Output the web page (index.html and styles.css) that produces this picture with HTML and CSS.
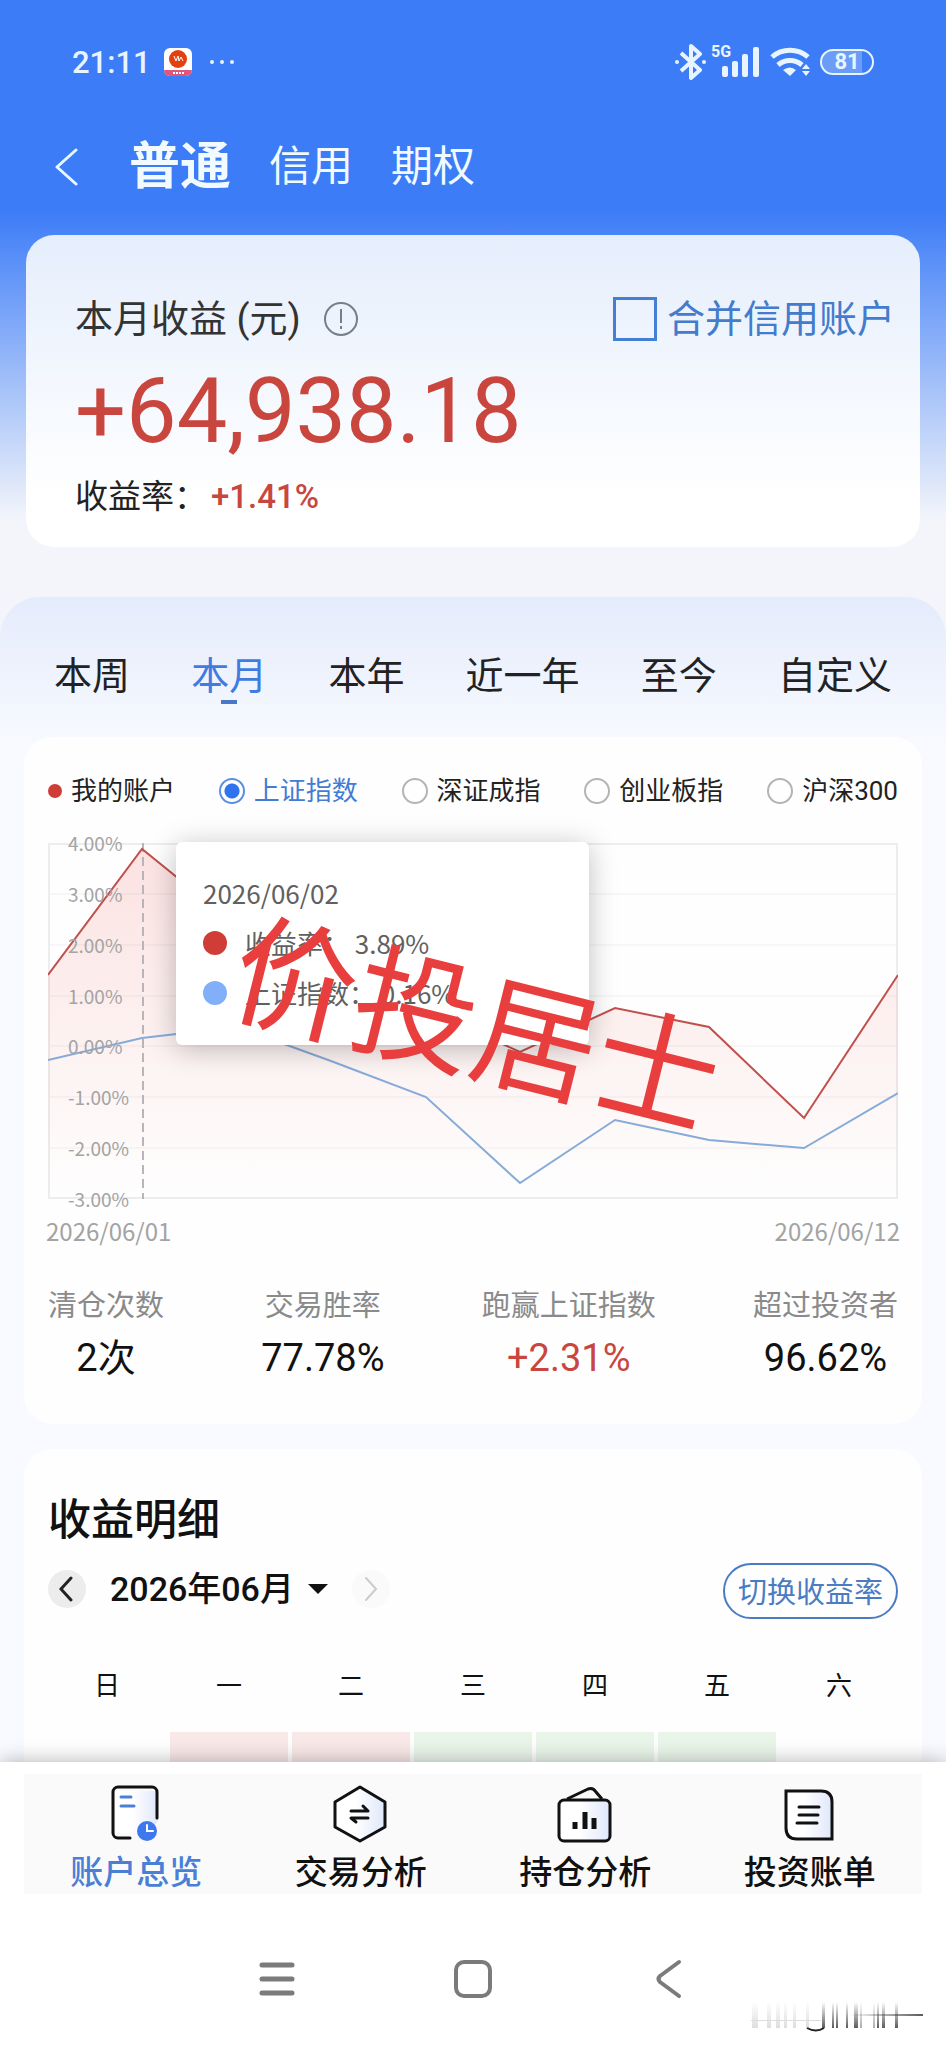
FILE: index.html
```html
<!DOCTYPE html>
<html lang="zh-CN">

<head>
    <title>收益分析</title>
    <meta charset="utf-8">
    <meta name="viewport" content="width=device-width, initial-scale=1.0">
    <link rel="stylesheet" href="styles.css">
</head>

<body>

    <div class="top">
        <div class="status">
            <div class="status-left">
                <span class="time">21:11</span>
                <svg class="app" width="28" height="28" viewBox="0 0 28 28">
                    <rect width="28" height="28" rx="6" fill="#fff" />
                    <path d="M0 22h28a6 6 0 0 1-6 6H6a6 6 0 0 1-6-6z" fill="#e0557c" />
                    <circle cx="14" cy="11" r="9" fill="#e2400e" />
                    <path d="M10 8l2 5 2-5 1 5 2-4 2 4" fill="none" stroke="#fff" stroke-width="1" />
                    <path d="M9 25h11" stroke="#fff" stroke-width="2" stroke-dasharray="2 1" />
                </svg>
                <svg width="28" height="8" viewBox="0 0 28 8" fill="#e8f4ff">
                    <circle cx="4" cy="4" r="2" />
                    <circle cx="14" cy="4" r="2" />
                    <circle cx="24" cy="4" r="2" />
                </svg>
            </div>
            <div class="status-right">
                <svg width="32" height="36" viewBox="0 0 32 36" fill="none" stroke="#e8f4ff" stroke-width="4" stroke-linejoin="round">
                    <path d="M6 9l19 17-9 8V2l9 8L6 27" />
                    <circle cx="2" cy="18" r="2" fill="#e8f4ff" stroke="none" />
                    <circle cx="29" cy="18" r="2" fill="#e8f4ff" stroke="none" />
                </svg>
                <div class="signal">
                    <span>5G</span>
                    <svg width="38" height="30" viewBox="0 0 38 30" fill="#e8f4ff">
                        <rect x="0" y="19" width="6" height="11" rx="2" />
                        <rect x="10" y="14" width="6" height="16" rx="2" />
                        <rect x="20" y="7" width="6" height="23" rx="2" />
                        <rect x="31" y="0" width="6" height="30" rx="2" />
                    </svg>
                </div>
                <svg width="42" height="30" viewBox="0 0 42 30" fill="none" stroke="#e8f4ff">
                    <path d="M2 10C12 1 28 1 38 10" stroke-width="5" />
                    <path d="M8 18c7-6 17-6 24 0" stroke-width="5" />
                    <path d="M13 23q7-5 13 0l-6 6z" fill="#e8f4ff" stroke="none" />
                    <path d="M32 22l4-5 4 5zM32 24l4 5 4-5z" fill="#e8f4ff" stroke="none" />
                </svg>
                <span class="battery">81</span>
            </div>
        </div>

        <div class="header">
            <button class="back" aria-label="返回">
                <svg width="24" height="38" viewBox="0 0 24 38" fill="none" stroke="#e8f8ff" stroke-width="3" stroke-linecap="round" stroke-linejoin="round">
                    <path d="M21 2L2 19l19 17" />
                </svg>
            </button>
            <button class="valgt">普通</button>
            <button>信用</button>
            <button>期权</button>
        </div>

        <div class="income">
            <div class="income-head">
                <h1>本月收益 (元)</h1>
                <svg width="36" height="36" viewBox="0 0 36 36" fill="none" stroke="#777e8a" stroke-width="2">
                    <circle cx="18" cy="18" r="16" />
                    <path d="M18 8v14M18 25v3" />
                </svg>
                <label class="merge"><input type="checkbox">合并信用账户</label>
            </div>
            <p class="amount">+64,938.18</p>
            <p class="rate">收益率：<span class="red">+1.41%</span></p>
        </div>
    </div>

    <main>
        <div class="period">
            <button>本周</button>
            <button class="valgt">本月</button>
            <button>本年</button>
            <button>近一年</button>
            <button>至今</button>
            <button>自定义</button>
        </div>

        <section class="card">
            <div class="legend">
                <span class="mine"><i class="dot"></i>我的账户</span>
                <label><input type="radio" name="indeks" checked>上证指数</label>
                <label><input type="radio" name="indeks">深证成指</label>
                <label><input type="radio" name="indeks">创业板指</label>
                <label><input type="radio" name="indeks">沪深300</label>
            </div>

            <div class="chart">
                <svg class="plot" viewBox="0 0 850 356" preserveAspectRatio="none">
                    <defs>
                        <linearGradient id="fill" x1="0" y1="0" x2="0" y2="1">
                            <stop offset="0" stop-color="#e8453c" stop-opacity="0.15" />
                            <stop offset="1" stop-color="#e8453c" stop-opacity="0" />
                        </linearGradient>
                    </defs>
                    <path class="grid" d="M0 51H850M0 102H850M0 153H850M0 203H850M0 254H850M0 305H850" />
                    <rect class="frame" x="1" y="1" width="848" height="354" />
                    <path fill="url(#fill)" d="M0 132L94 6L189 83L283 120L378 166L472 209L567 165L661 184L756 275L850 132V356H0Z" />
                    <path class="marker" d="M95 0V356" />
                    <path class="line index" d="M0 217L94 195L189 184L283 218L378 254L472 340L567 277L661 297L756 305L850 250" />
                    <path class="line account" d="M0 132L94 6L189 83L283 120L378 166L472 209L567 165L661 184L756 275L850 132" />
                </svg>
                <div class="scale">
                    <span>4.00%</span>
                    <span>3.00%</span>
                    <span>2.00%</span>
                    <span>1.00%</span>
                    <span>0.00%</span>
                    <span>-1.00%</span>
                    <span>-2.00%</span>
                    <span>-3.00%</span>
                </div>
                <div class="tip">
                    <p>2026/06/02</p>
                    <p><i class="dot"></i>收益率： 3.89%</p>
                    <p><i class="dot blue"></i>上证指数： 0.16%</p>
                </div>
                <div class="stamp">价投居士</div>
            </div>
            <div class="dates"><span>2026/06/01</span><span>2026/06/12</span></div>

            <dl class="stats">
                <div>
                    <dt>清仓次数</dt>
                    <dd>2次</dd>
                </div>
                <div>
                    <dt>交易胜率</dt>
                    <dd>77.78%</dd>
                </div>
                <div>
                    <dt>跑赢上证指数</dt>
                    <dd class="red">+2.31%</dd>
                </div>
                <div>
                    <dt>超过投资者</dt>
                    <dd>96.62%</dd>
                </div>
            </dl>
        </section>

        <section class="card detail">
            <h2>收益明细</h2>
            <div class="month">
                <button class="round" aria-label="上个月">
                    <svg width="16" height="26" viewBox="0 0 16 26" fill="none" stroke="#222" stroke-width="3" stroke-linecap="round">
                        <path d="M12 2L2 13l10 11" />
                    </svg>
                </button>
                <button class="pick">2026年06月<svg width="20" height="10" viewBox="0 0 20 10">
                        <path d="M0 0h20L10 10z" fill="#111" />
                    </svg></button>
                <button class="round next" aria-label="下个月">
                    <svg width="16" height="26" viewBox="0 0 16 26" fill="none" stroke="#ccc" stroke-width="2" stroke-linecap="round">
                        <path d="M3 2l10 11L3 24" />
                    </svg>
                </button>
                <button class="switch">切换收益率</button>
            </div>
            <table>
                <thead>
                    <tr>
                        <th>日</th>
                        <th>一</th>
                        <th>二</th>
                        <th>三</th>
                        <th>四</th>
                        <th>五</th>
                        <th>六</th>
                    </tr>
                </thead>
                <tbody>
                    <tr>
                        <td></td>
                        <td class="up"></td>
                        <td class="up"></td>
                        <td class="down"></td>
                        <td class="down"></td>
                        <td class="down"></td>
                        <td></td>
                    </tr>
                </tbody>
            </table>
        </section>
    </main>

    <footer>
        <nav class="menu">
            <a href="#" class="valgt">
                <svg width="64" height="64" viewBox="0 0 64 64" fill="none" stroke="#111" stroke-width="4" stroke-linecap="round">
                    <defs>
                        <linearGradient id="shade" x1="0" y1="0" x2="1" y2="0">
                            <stop offset="0.4" stop-color="#fff" />
                            <stop offset="1" stop-color="#dfe7fb" />
                        </linearGradient>
                    </defs>
                    <path d="M12 10h42v29L46 52H12z" fill="url(#shade)" stroke="none" />
                    <path d="M26 57H14a5 5 0 0 1-5-5V11a5 5 0 0 1 5-5h34a5 5 0 0 1 5 5v26" stroke-width="3" />
                    <path d="M17 16h10M17 25h13" stroke="#4a80d8" stroke-width="3" />
                    <circle cx="43" cy="50" r="10" fill="#3d78ee" stroke="none" />
                    <path d="M43 44v6h6" stroke="#fff" stroke-width="2" />
                </svg>
                账户总览
            </a>
            <a href="#">
                <svg width="64" height="64" viewBox="0 0 64 64" fill="none" stroke="#111" stroke-width="3" stroke-linecap="round" stroke-linejoin="round">
                    <path d="M31 6l25 15v25L31 60 6 46V21z" fill="url(#shade)" />
                    <path d="M22 30h17l-5-5M39 37H22l5 4" />
                </svg>
                交易分析
            </a>
            <a href="#">
                <svg width="64" height="64" viewBox="0 0 64 64" fill="none" stroke="#111" stroke-width="3">
                    <rect x="6" y="19" width="51" height="41" rx="5" fill="url(#shade)" />
                    <path d="M14 18l21-10q5-2 8 3l6 7" />
                    <path d="M22 41v7M32 31v17M41 37v11" stroke-width="5" />
                </svg>
                持仓分析
            </a>
            <a href="#">
                <svg width="64" height="64" viewBox="0 0 64 64" fill="none" stroke="#111" stroke-width="3">
                    <path d="M8 10h35q11 0 11 11v37H19Q8 58 8 47z" fill="url(#shade)" />
                    <path d="M21 26h20M21 34h19M19 42h20" stroke-linecap="round" />
                </svg>
                投资账单
            </a>
        </nav>
        <div class="system">
            <button aria-label="菜单">
                <svg width="40" height="40" viewBox="0 0 40 40" fill="none" stroke="#7b7b7b" stroke-width="5" stroke-linecap="round">
                    <path d="M5 6h30M5 20h30M5 34h30" />
                </svg>
            </button>
            <button aria-label="主屏幕">
                <svg width="40" height="40" viewBox="0 0 40 40" fill="none" stroke="#7b7b7b" stroke-width="4">
                    <rect x="3" y="3" width="34" height="34" rx="8" />
                </svg>
            </button>
            <button aria-label="返回">
                <svg width="40" height="40" viewBox="0 0 40 40" fill="none" stroke="#7b7b7b" stroke-width="4" stroke-linecap="round" stroke-linejoin="round">
                    <path d="M30 3L11 17q-3 3 0 6l19 14" />
                </svg>
            </button>
        </div>
        <svg class="scratch" width="180" height="40" viewBox="0 0 180 40" fill="none">
            <defs>
                <linearGradient id="fade" x1="0" y1="0" x2="0" y2="1">
                    <stop offset="0" stop-color="#333" stop-opacity="0" />
                    <stop offset="1" stop-color="#333" stop-opacity="0.8" />
                </linearGradient>
                <linearGradient id="fadex" x1="0" y1="0" x2="1" y2="0">
                    <stop offset="0.3" stop-color="#333" stop-opacity="0" />
                    <stop offset="1" stop-color="#333" stop-opacity="0.8" />
                </linearGradient>
            </defs>
            <g fill="url(#fade)">
                <rect x="74" y="8" width="3" height="26" />
                <rect x="84" y="8" width="2" height="26" />
                <rect x="88" y="8" width="2" height="26" />
                <rect x="98" y="8" width="2" height="26" />
                <rect x="106" y="8" width="4" height="26" />
                <rect x="112" y="8" width="2" height="26" opacity="0.5" />
                <rect x="125" y="8" width="2" height="26" opacity="0.5" />
                <rect x="129" y="8" width="2" height="26" />
                <rect x="134" y="8" width="3" height="26" />
                <rect x="147" y="8" width="3" height="26" />
            </g>
            <g fill="url(#fade)" opacity="0.2">
                <rect x="4" y="8" width="6" height="26" />
                <rect x="19" y="8" width="4" height="26" />
                <rect x="28" y="8" width="4" height="26" />
                <rect x="36" y="8" width="3" height="26" />
                <rect x="45" y="8" width="3" height="26" />
                <rect x="58" y="8" width="3" height="26" />
            </g>
            <rect x="70" y="20" width="105" height="2" fill="url(#fadex)" />
            <rect x="3" y="26" width="70" height="1" fill="#ddd" />
            <path d="M59 34q9 5 17 0" stroke="#222" stroke-width="2" />
        </svg>
    </footer>

</body>

</html>
```
FILE: styles.css
```css
* {
    box-sizing: border-box;
}

body {
    margin: 0;
    font-family: Roboto, "Noto Sans CJK SC", sans-serif;
    color: #222;
    background-color: #f3f5fa;
}

h1,
h2,
p,
dl,
dd {
    margin: 0;
    font-weight: 400;
}

button {
    border: none;
    padding: 0;
    background: none;
    font-family: inherit;
    color: inherit;
}

svg {
    display: block;
    flex: none;
}

input {
    appearance: none;
    margin: 0;
    flex: none;
}

.red {
    color: #c9463e;
}

/* top */

.top {
    background: linear-gradient(#3c7cf7 0, #3c7cf7 210px, #f3f5fa 520px);
    padding-bottom: 50px;
}

.status {
    display: flex;
    justify-content: space-between;
    align-items: center;
    height: 124px;
    padding: 0 72px;
    color: #e8f4ff;
}

.status-left,
.status-right {
    display: flex;
    align-items: center;
}

.time {
    font-size: 31px;
    font-weight: 500;
    margin-right: 13px;
}

.app {
    margin-right: 16px;
}

.signal {
    position: relative;
    padding: 0 10px 0 15px;
}

.signal span {
    position: absolute;
    left: 4px;
    top: -3px;
    font-size: 16px;
    line-height: 16px;
    font-weight: 700;
}

.battery {
    width: 54px;
    height: 26px;
    margin-left: 8px;
    border: 2px solid #e8f4ff;
    border-radius: 13px;
    background: linear-gradient(90deg, #6b9cf8 80%, #3c7cf7 80%);
    font-size: 22px;
    line-height: 22px;
    font-weight: 700;
    text-align: center;
}

.header {
    display: flex;
    align-items: center;
    gap: 38px;
    height: 86px;
    padding-left: 55px;
    color: #f0faff;
}

.header button {
    font-size: 42px;
    line-height: 60px;
}

.header .back {
    margin-right: 12px;
}

.header .valgt {
    font-size: 51px;
    font-weight: 700;
}

.income {
    margin: 25px 26px 0;
    padding: 62px 25px 30px 49px;
    border-radius: 28px;
    background: linear-gradient(#e5eefc, #fff 85%);
}

.income-head {
    display: flex;
    align-items: center;
    height: 44px;
    color: #333;
}

.income-head h1 {
    font-size: 38px;
    line-height: 44px;
    margin-right: 22px;
}

.merge {
    display: flex;
    align-items: center;
    gap: 10px;
    margin-left: auto;
    font-size: 38px;
    line-height: 44px;
    color: #437bcd;
}

.merge input {
    width: 44px;
    height: 44px;
    border: 3px solid #437fd6;
}

.amount {
    margin-top: 27px;
    font-size: 90px;
    line-height: 88px;
    color: #c9463e;
}

.rate {
    margin-top: 21px;
    font-size: 33px;
    line-height: 40px;
}

.rate .red {
    margin-left: 4px;
    font-weight: 500;
}

/* period */

main {
    border-radius: 40px 40px 0 0;
    background: linear-gradient(#e4ebfb, #f8faff 150px);
}

.period {
    display: flex;
    justify-content: space-between;
    padding: 57px 54px 39px;
}

.period button {
    position: relative;
    font-size: 38px;
    line-height: 44px;
}

.period .valgt {
    color: #3f7be0;
}

.period .valgt::after {
    content: "";
    position: absolute;
    left: 50%;
    bottom: -6px;
    width: 16px;
    height: 4px;
    margin-left: -8px;
    background-color: #4a78c8;
}

.card {
    margin: 0 24px 25px;
    padding: 39px 24px 44px;
    border-radius: 28px;
    background-color: #fefefe;
}

.legend {
    display: flex;
    justify-content: space-between;
    font-size: 26px;
    line-height: 30px;
}

.legend label,
.mine {
    display: flex;
    align-items: center;
    gap: 9px;
}

.dot {
    flex: none;
    width: 14px;
    height: 14px;
    border-radius: 50%;
    background-color: #d03c36;
}

.legend input {
    width: 26px;
    height: 26px;
    border: 2px solid #b4b4b4;
    border-radius: 50%;
}

.legend input:checked {
    border-color: #5b8fe0;
    background: radial-gradient(#2f74ee 7px, #fff 8px);
}

.legend label:has(:checked) {
    color: #437bd6;
}

/* chart */

.chart {
    position: relative;
    margin-top: 37px;
}

.plot {
    width: 100%;
    height: 356px;
}

.plot path,
.plot rect {
    vector-effect: non-scaling-stroke;
}

.grid {
    stroke: #efefef;
    stroke-width: 1;
}

.frame {
    fill: none;
    stroke: #ededed;
    stroke-width: 2;
}

.marker {
    stroke: #b9b3ba;
    stroke-width: 2;
    stroke-dasharray: 9 5;
}

.line {
    fill: none;
    stroke-width: 2;
}

.account {
    stroke: #c0504d;
}

.index {
    stroke: #86abd8;
}

.scale {
    position: absolute;
    top: -10px;
    bottom: -10px;
    left: 20px;
    display: flex;
    flex-direction: column;
    justify-content: space-between;
    font-family: "Noto Sans CJK SC", sans-serif;
    font-size: 19px;
    line-height: 20px;
    color: #a3a3a3;
}

.tip {
    position: absolute;
    left: 128px;
    top: -1px;
    display: grid;
    gap: 20px;
    width: 413px;
    padding: 36px 27px 37px;
    border-radius: 6px;
    background-color: #fff;
    box-shadow: 0 4px 28px rgba(0, 0, 0, 0.25);
    font-family: "Noto Sans CJK SC", sans-serif;
    font-size: 26px;
    line-height: 30px;
    color: #606060;
}

.tip p {
    display: flex;
    align-items: center;
}

.tip .dot {
    width: 24px;
    height: 24px;
    margin-right: 18px;
}

.tip .blue {
    background-color: #82b0f8;
}

.stamp {
    position: absolute;
    left: 182px;
    top: 104px;
    font-family: "Noto Sans CJK SC", serif;
    font-size: 124px;
    line-height: 140px;
    color: #e83e3e;
    transform: rotate(14deg);
    white-space: nowrap;
}

.dates {
    display: flex;
    justify-content: space-between;
    margin: 17px -2px 0;
    font-family: "Noto Sans CJK SC", sans-serif;
    font-size: 24px;
    line-height: 30px;
    color: #a3a3a3;
}

.stats {
    display: flex;
    justify-content: space-between;
    margin-top: 40px;
    text-align: center;
}

.stats dt {
    font-size: 29px;
    line-height: 40px;
    color: #8a8a8a;
}

.stats dd {
    margin-top: 10px;
    font-size: 38px;
    line-height: 44px;
    color: #111;
}

.stats .red {
    color: #c9463e;
}

/* detail */

.detail {
    margin-bottom: 0;
    padding: 46px 24px 0;
    border-radius: 28px 28px 0 0;
    color: #111;
}

h2 {
    font-size: 43px;
    line-height: 50px;
    font-weight: 500;
}

.month {
    display: flex;
    align-items: center;
    margin-top: 18px;
}

.round {
    display: flex;
    align-items: center;
    justify-content: center;
    width: 38px;
    height: 38px;
    margin-bottom: 4px;
    border-radius: 50%;
    background-color: #ececec;
}

.next {
    background-color: #fafafa;
}

.pick {
    display: flex;
    align-items: center;
    gap: 14px;
    margin: 0 24px 4px;
    font-size: 34px;
    line-height: 40px;
    font-weight: 500;
}

.switch {
    height: 56px;
    margin-left: auto;
    padding: 4px 13px 0;
    border: 2px solid #4a7cc4;
    border-radius: 28px;
    font-size: 29px;
    line-height: 40px;
    color: #4a7cc4;
}

table {
    width: calc(100% + 8px);
    margin: 49px -4px 0;
    table-layout: fixed;
    border-spacing: 4px 0;
}

th {
    height: 64px;
    padding: 0;
    font-size: 26px;
    line-height: 36px;
    font-weight: 400;
    vertical-align: top;
}

td {
    height: 30px;
    padding: 0;
}

.up {
    background-color: #f9e8e8;
}

.down {
    background-color: #eaf5ea;
}

/* bottom */

footer {
    position: sticky;
    bottom: 0;
    padding: 12px 24px 0;
    background-color: #fff;
    box-shadow: 0 0 20px rgba(0, 0, 0, 0.3);
}

.menu {
    display: grid;
    grid-template-columns: 1fr 1fr 1fr 1fr;
    background-color: #fafafa;
}

.menu a {
    display: flex;
    flex-direction: column;
    align-items: center;
    height: 120px;
    padding-top: 7px;
    font-size: 33px;
    line-height: 56px;
    font-weight: 500;
    color: #111;
    text-decoration: none;
}

.menu .valgt {
    color: #4a7fd6;
}

.system {
    display: flex;
    justify-content: center;
    gap: 156px;
    padding: 65px 0 49px;
}

.scratch {
    position: absolute;
    right: 18px;
    bottom: 14px;
}
```
